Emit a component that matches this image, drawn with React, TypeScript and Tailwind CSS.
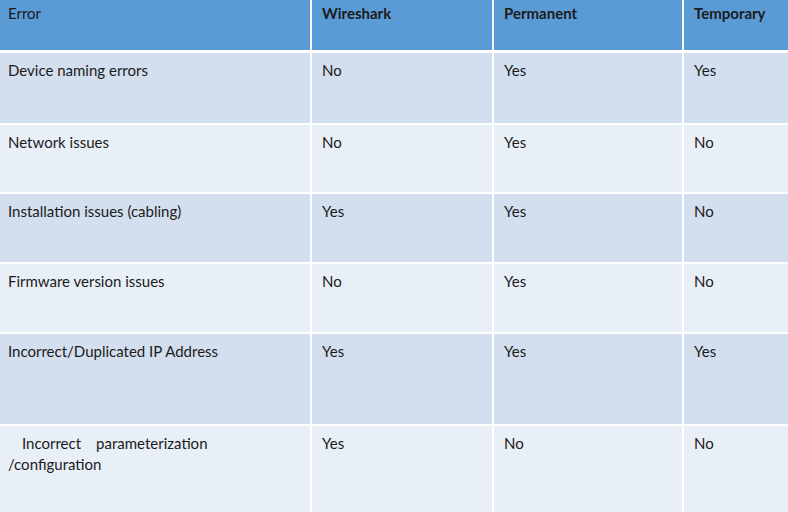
import React from 'react';

const rows = [
  { error: 'Device naming errors', wireshark: 'No', permanent: 'Yes', temporary: 'Yes', h: 'h-[70px]' },
  { error: 'Network issues', wireshark: 'No', permanent: 'Yes', temporary: 'No', h: 'h-[67px]' },
  { error: 'Installation issues (cabling)', wireshark: 'Yes', permanent: 'Yes', temporary: 'No', h: 'h-[68px]' },
  { error: 'Firmware version issues', wireshark: 'No', permanent: 'Yes', temporary: 'No', h: 'h-[68px]' },
  { error: 'Incorrect/Duplicated IP Address', wireshark: 'Yes', permanent: 'Yes', temporary: 'Yes', h: 'h-[90px]' },
  { error: 'param', wireshark: 'Yes', permanent: 'No', temporary: 'No', h: 'h-[90px]' },
];

export default function App() {
  return (
    <div className="w-[788px] h-[512px] overflow-hidden bg-white text-[15px] leading-[21px] text-[#1b1b1b] font-['Lato','Liberation_Sans',sans-serif]">
      <div className="grid grid-cols-[310px_180px_188px_1fr] gap-x-[2px] bg-white">
        <div className="h-[50px] bg-[#5b9bd5] pl-2 pt-[3px]">Error</div>
        <div className="h-[50px] bg-[#5b9bd5] pl-2.5 pt-[3px] font-bold">Wireshark</div>
        <div className="h-[50px] bg-[#5b9bd5] pl-2.5 pt-[3px] font-bold">Permanent</div>
        <div className="h-[50px] bg-[#5b9bd5] pl-2.5 pt-[3px] font-bold">Temporary</div>
      </div>
      <div className="mt-[3px] flex flex-col gap-y-[2px]">
        {rows.map((r, i) => {
          const bg = i % 2 === 0 ? 'bg-[#d3dfee]' : 'bg-[#e9eff7]';
          return (
            <div key={i} className="grid grid-cols-[310px_180px_188px_1fr] gap-x-[2px]">
              <div className={`${r.h} ${bg} pl-2 pt-[7px]`}>
                {r.error === 'param' ? (
                  <>
                    <div className="flex pl-[14px]">
                      <span>Incorrect</span>
                      <span className="ml-[15px]">parameterization</span>
                    </div>
                    <div>/configuration</div>
                  </>
                ) : (
                  r.error
                )}
              </div>
              <div className={`${r.h} ${bg} pl-2.5 pt-[7px]`}>{r.wireshark}</div>
              <div className={`${r.h} ${bg} pl-2.5 pt-[7px]`}>{r.permanent}</div>
              <div className={`${r.h} ${bg} pl-2.5 pt-[7px]`}>{r.temporary}</div>
            </div>
          );
        })}
      </div>
    </div>
  );
}
